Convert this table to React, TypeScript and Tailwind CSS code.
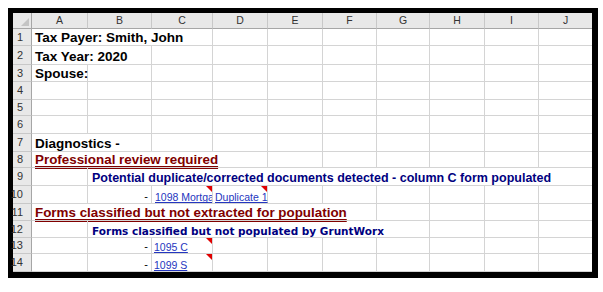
import React from 'react';

type Seg = {
  span?: number;
  text?: string;
  kind?: 'title' | 'red' | 'navy' | 'navy2' | 'dash' | 'link' | 'clip';
  note?: boolean;
};

const LETTERS = ['A', 'B', 'C', 'D', 'E', 'F', 'G', 'H', 'I', 'J'];

const ROWS: Seg[][] = [
  [{ span: 3, text: 'Tax Payer: Smith, John', kind: 'title' }],
  [{ span: 2, text: 'Tax Year: 2020', kind: 'title' }],
  [{ span: 1, text: 'Spouse:', kind: 'title' }],
  [],
  [],
  [],
  [{ span: 2, text: 'Diagnostics -', kind: 'title' }],
  [{ span: 4, text: 'Professional review required', kind: 'red' }],
  [{}, { span: 9, text: 'Potential duplicate/corrected documents detected - column C form populated', kind: 'navy' }],
  [{}, { text: '-', kind: 'dash' }, { text: '1098 Mortgage', kind: 'clip', note: true }, { text: 'Duplicate 1', kind: 'link', note: true }],
  [{ span: 6, text: 'Forms classified but not extracted for population', kind: 'red' }],
  [{}, { span: 6, text: 'Forms classified but not populated by GruntWorx', kind: 'navy2' }],
  [{}, { text: '-', kind: 'dash' }, { text: '1095 C', kind: 'link', note: true }],
  [{}, { text: '-', kind: 'dash' }, { text: '1099 S', kind: 'link', note: true }],
];

const KIND: Record<string, string> = {
  title: 'font-bold text-[13.5px] text-black px-[3px]',
  red: 'font-bold text-[13.4px] text-[#800000] px-[3px] underline decoration-double decoration-1 underline-offset-2 [text-decoration-skip-ink:none]',
  navy: 'font-bold text-[12.5px] text-[#000080] px-[4px]',
  navy2: "font-bold text-[10.5px] text-[#000080] px-[4px] font-['DejaVu_Sans',Verdana,sans-serif]",
  dash: 'text-[11px] text-black justify-end pr-[3px]',
  link: 'text-[10.5px] text-[#2436c0] underline [text-decoration-skip-ink:none] pl-[2px]',
  clip: 'text-[10.5px] text-[#2436c0] underline [text-decoration-skip-ink:none] pl-[3px] overflow-hidden',
};

const SPAN: Record<number, string> = {
  1: 'col-span-1',
  2: 'col-span-2',
  3: 'col-span-3',
  4: 'col-span-4',
  6: 'col-span-6',
  9: 'col-span-9',
};

function Row({ n, segs }: { n: number; segs: Seg[] }) {
  const cells: Seg[] = [...segs];
  let used = cells.reduce((s, c) => s + (c.span ?? 1), 0);
  while (used < 10) {
    cells.push({});
    used++;
  }
  let col = 0;
  return (
    <>
      <div className="bg-[#e8e8e8] border-r border-b border-r-[#a6a6a6] border-b-[#c8c8c8] flex items-center justify-end pr-[8px] text-[11px] text-[#333]">
        {n}
      </div>
      {cells.map((c, i) => {
        const span = c.span ?? 1;
        col += span;
        const last = col === 10;
        return (
          <div
            key={i}
            className={`relative flex items-end pb-[1px] whitespace-nowrap border-b border-[#d4d4d4] ${last ? '' : 'border-r'} ${SPAN[span]} ${c.kind ? KIND[c.kind] : ''}`}
          >
            {c.text}
            {c.note && (
              <span className="absolute top-0 right-0 w-0 h-0 border-l-[6px] border-l-transparent border-t-[6px] border-t-[#e00000]" />
            )}
          </div>
        );
      })}
    </>
  );
}

export default function App() {
  return (
    <div className="w-[603px] h-[292px] bg-white pt-[8px] pl-[8px] font-['Liberation_Sans',Arial,sans-serif]">
      <div className="w-[590px] h-[270px] border-black border-l-[5px] border-t-[5px] border-r-[6px] border-b-[6px] bg-white">
        <div className="grid grid-cols-[19px_56px_64px_61px_55px_55px_54px_53px_55px_54px_53px] grid-rows-[16px_17px_19px_17px_18px_16px_18px_18px_16px_18px_18px_17px_17px_16px_18px] leading-none">
          {/* corner */}
          <div className="relative bg-[#e8e8e8] border-r border-b border-[#a6a6a6]">
            <svg className="absolute right-[2px] bottom-[2px]" width="8" height="8" viewBox="0 0 8 8">
              <path d="M8 0 L8 8 L0 8 Z" fill="#c4c4c4" />
            </svg>
          </div>
          {LETTERS.map((l, i) => (
            <div
              key={l}
              className={`bg-[#e8e8e8] border-b border-b-[#a6a6a6] ${i < 9 ? 'border-r border-r-[#c8c8c8]' : ''} flex items-center justify-center text-[10.5px] text-[#333]`}
            >
              {l}
            </div>
          ))}
          {ROWS.map((segs, i) => (
            <Row key={i} n={i + 1} segs={segs} />
          ))}
        </div>
      </div>
    </div>
  );
}
